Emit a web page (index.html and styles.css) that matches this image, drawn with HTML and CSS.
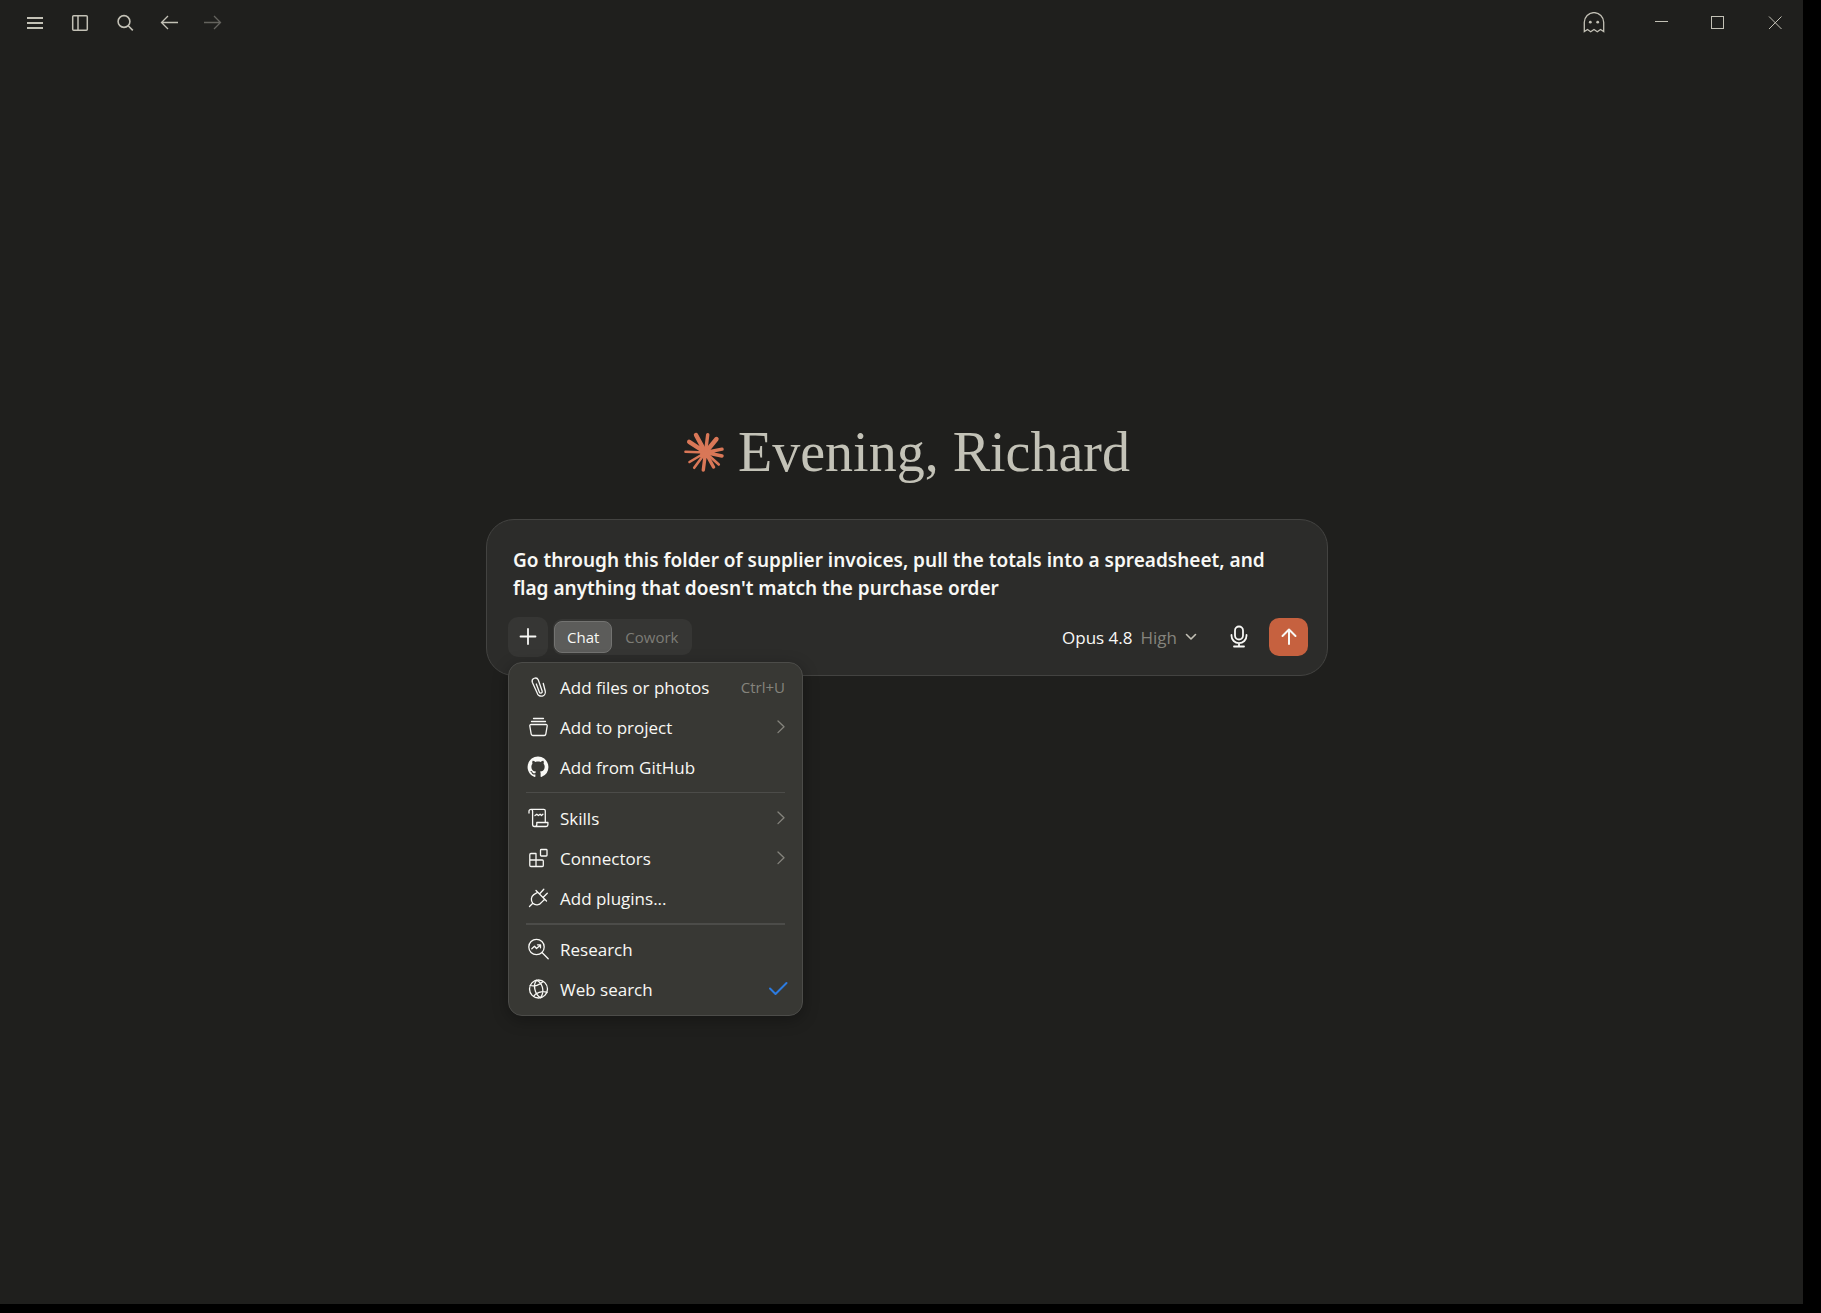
FILE: index.html
```html
<!DOCTYPE html>
<html lang="en">
<head>
    <meta charset="UTF-8">
    <meta name="viewport" content="width=device-width, initial-scale=1.0">
    <title>Claude</title>
    <link rel="stylesheet" href="styles.css">
</head>
<body>
    <div class="window">
        <header class="titlebar">
            <nav class="titlebar-nav">
                <button class="icon-btn" aria-label="Menu">
                    <svg width="20" height="20" viewBox="0 0 20 20" stroke-width="2"><path d="M2 5h16M2 10h16M2 15h16"/></svg>
                </button>
                <button class="icon-btn" aria-label="Toggle sidebar">
                    <svg width="20" height="20" viewBox="0 0 20 20" stroke-width="1.5"><rect x="2.7" y="2.7" width="14.6" height="14.6" rx="1"/><path d="M8 2.7v14.6"/></svg>
                </button>
                <button class="icon-btn" aria-label="Search">
                    <svg width="20" height="20" viewBox="0 0 20 20" stroke-width="1.6"><circle cx="9" cy="8.5" r="5.9"/><path d="M13.2 12.8l4.600 4.600"/></svg>
                </button>
                <button class="icon-btn history" aria-label="Back">
                    <svg width="20" height="20" viewBox="0 0 20 20" stroke-width="1.3"><path d="M19 9.500H2.500M9 3L2.500 9.500 9 16"/></svg>
                </button>
                <button class="icon-btn history dim" aria-label="Forward">
                    <svg width="20" height="20" viewBox="0 0 20 20" stroke-width="1.3"><path d="M2 9.500h16.500M12 3l6.500 6.500L12 16"/></svg>
                </button>
            </nav>
            <div class="titlebar-controls">
                <button class="icon-btn ghost" aria-label="Incognito chat">
                    <svg width="22" height="22" viewBox="0 0 22 22" stroke-width="1.3"><path d="M1.300 19.500V10.300a9.700 9.700 0 0 1 19.400 0v9.200l-3.200-2-3.200 2.200L11 17.500l-3.300 2.200-3.200-2.200z"/><circle class="solid" cx="7.300" cy="10.200" r="1.400"/><circle class="solid" cx="14.700" cy="10.200" r="1.400"/></svg>
                </button>
                <button class="icon-btn window-btn" aria-label="Minimize">
                    <svg width="14" height="14" viewBox="0 0 14 14" stroke-width="1"><path d="M1 5.500h13"/></svg>
                </button>
                <button class="icon-btn window-btn" aria-label="Maximize">
                    <svg width="14" height="14" viewBox="0 0 14 14" stroke-width="1"><rect x=".5" y=".5" width="12" height="12"/></svg>
                </button>
                <button class="icon-btn window-btn" aria-label="Close">
                    <svg width="14" height="14" viewBox="0 0 14 14" stroke-width="1"><path d="M1 .500l12.500 12.500M13.500 .5L1 13"/></svg>
                </button>
            </div>
        </header>

        <main class="main">
            <h1 class="greeting">
                <svg class="spark" width="40" height="40" viewBox="0 0 40 40" aria-hidden="true">
                    <circle cx="21.500" cy="20.500" r="5.500" stroke="none"/>
                    <g stroke-width="4.400">
                        <path d="M21.500 20.500L12 3M21.500 20.500L32.500 7M21.500 20.500L5.200 9.800"/>
                    </g>
                    <g stroke-width="3.400">
                        <path d="M21.500 20.500L23.700 2.700M21.500 20.500L38 17.200M21.500 20.500L38 24M21.500 20.500L29.500 35M21.500 20.500L19.300 38"/>
                    </g>
                    <g stroke-width="2.600">
                        <path d="M21.500 20.500L34.800 32.500M21.500 20.500L10.200 35.800M21.500 20.500L5.500 30M21.500 20.500L1.500 19.700"/>
                    </g>
                </svg>
                Evening, Richard
            </h1>

            <form class="composer">
                <textarea class="prompt" rows="2" aria-label="Prompt" spellcheck="false">Go through this folder of supplier invoices, pull the totals into a spreadsheet, and flag anything that doesn't match the purchase order</textarea>

                <div class="toolbar">
                    <div class="attach">
                        <button type="button" class="add-btn" aria-label="Add" aria-expanded="true">
                            <svg width="20" height="20" viewBox="0 0 20 20" stroke-width="1.800"><path d="M10 2v15M2.500 9.500h15"/></svg>
                        </button>

                        <div class="menu" role="menu">
                            <button type="button" class="menu-item" role="menuitem">
                                <svg class="menu-icon" width="24" height="24" viewBox="0 0 24 24"><path d="M17.300 8.500l1.900 7.500a4.100 4.100 0 0 1-8 2.100L6.300 7.200a3.200 3.200 0 0 1 6-2.200l3.900 11.200a1.500 1.500 0 0 1-2.900.8L10.300 9"/></svg>
                                <span class="menu-label">Add files or photos</span>
                                <kbd class="shortcut">Ctrl+U</kbd>
                            </button>
                            <button type="button" class="menu-item" role="menuitem">
                                <svg class="menu-icon" width="24" height="24" viewBox="0 0 24 24"><path d="M7.500 3.500h10M5.500 6.500h14M5 9.500h15a1.200 1.200 0 0 1 1.200 1.400l-1.400 8.300a1.600 1.600 0 0 1-1.600 1.300H6.800a1.600 1.600 0 0 1-1.600-1.300L3.800 10.900A1.200 1.200 0 0 1 5 9.500z"/></svg>
                                <span class="menu-label">Add to project</span>
                                <svg class="chevron" width="8" height="14" viewBox="0 0 8 14"><path d="M1 1l6 5.800-6 5.800"/></svg>
                            </button>
                            <button type="button" class="menu-item" role="menuitem">
                                <svg class="menu-icon github" width="24" height="24" viewBox="-1.200 -1.200 18.400 18.400"><path d="M8 0C3.580 0 0 3.580 0 8c0 3.540 2.290 6.530 5.470 7.590.4.070.55-.17.55-.38 0-.19-.01-.82-.01-1.490-2.010.37-2.530-.49-2.690-.94-.09-.23-.48-.94-.82-1.130-.28-.15-.68-.52-.01-.53.63-.01 1.080.58 1.230.82.72 1.210 1.870.87 2.330.66.07-.52.28-.87.51-1.070-1.780-.2-3.640-.89-3.640-3.950 0-.87.31-1.590.82-2.150-.08-.2-.36-1.020.08-2.120 0 0 .67-.21 2.200.82.64-.18 1.320-.27 2-.27s1.360.09 2 .27c1.530-1.040 2.200-.82 2.200-.82.44 1.100.16 1.920.08 2.120.51.56.82 1.270.82 2.150 0 3.070-1.870 3.750-3.650 3.950.29.25.54.73.54 1.480 0 1.070-.01 1.930-.01 2.200 0 .21.15.46.55.38A8.010 8.010 0 0 0 16 8c0-4.420-3.580-8-8-8z"/></svg>
                                <span class="menu-label">Add from GitHub</span>
                            </button>

                            <hr class="divider">

                            <button type="button" class="menu-item" role="menuitem">
                                <svg class="menu-icon" width="24" height="24" viewBox="0 0 24 24"><path d="M3 7V5.300a2 2 0 0 1 2-2h12.800a1.500 1.500 0 0 1 1.500 1.500v10.700M5 3.300a1.600 1.600 0 0 1 1.600 1.600v13.700a1.900 1.900 0 0 0 1.900 1.900h11.700a1.700 1.700 0 0 0 1.700-1.700v-2.300H10.800v2a2 2 0 0 1-2 2M9 9.500l1.800-1.300 1.600 1.300 1.700-1.300 1.400 1.300 1.400-1.300"/></svg>
                                <span class="menu-label">Skills</span>
                                <svg class="chevron" width="8" height="14" viewBox="0 0 8 14"><path d="M1 1l6 5.800-6 5.800"/></svg>
                            </button>
                            <button type="button" class="menu-item" role="menuitem">
                                <svg class="menu-icon" width="24" height="24" viewBox="0 0 24 24"><path d="M5 7.500h5v13H5A1.200 1.200 0 0 1 3.800 19.300V8.700A1.200 1.200 0 0 1 5 7.500zM3.800 14h12.500a1 1 0 0 1 1 1v4.500a1 1 0 0 1-1 1H10"/><rect x="14.500" y="3.500" width="6.500" height="6.500" rx=".8"/></svg>
                                <span class="menu-label">Connectors</span>
                                <svg class="chevron" width="8" height="14" viewBox="0 0 8 14"><path d="M1 1l6 5.800-6 5.800"/></svg>
                            </button>
                            <button type="button" class="menu-item" role="menuitem">
                                <svg class="menu-icon" width="24" height="24" viewBox="0 0 24 24"><path d="M3.500 20.500l3.300-3.300M10 4.500l10.500 10.500M11.700 6.200L7.800 8.600C4.800 10.700 4.700 14.800 6.800 17.200c2.400 2.300 6.600 2.200 8.700-.8l3.200-3.200M13.500 8l4.300-4.700M17 11.500l4.300-4.300"/></svg>
                                <span class="menu-label">Add plugins...</span>
                            </button>

                            <hr class="divider thick">

                            <button type="button" class="menu-item" role="menuitem">
                                <svg class="menu-icon" width="24" height="24" viewBox="0 0 24 24"><circle cx="10.500" cy="10" r="7.700"/><path d="M16 15.500l6.200 6.200M5.800 11.700l2.700-2.500 2 2.300 3.800-3.300M11.500 7.800h3v3"/></svg>
                                <span class="menu-label">Research</span>
                            </button>
                            <button type="button" class="menu-item" role="menuitemcheckbox" aria-checked="true">
                                <svg class="menu-icon" width="24" height="24" viewBox="0 0 24 24"><circle cx="12.500" cy="12" r="9"/><path d="M10.500 3.300C7 7.500 8.200 16.500 14.500 20.800M10.500 3.300c5.500 1.700 8.800 10.700 4 17.500M4.200 8.500c4 1.200 9.800-.5 12.800-4M7.500 19.500c2-3.500 8.500-6 13.500-4.200"/></svg>
                                <span class="menu-label">Web search</span>
                                <svg class="check" width="20" height="16" viewBox="0 0 20 16"><path d="M2 7.500l5.500 5.500L18.500 2"/></svg>
                            </button>
                        </div>
                    </div>

                    <div class="mode-switch">
                        <button type="button" class="mode active" aria-pressed="true">Chat</button>
                        <button type="button" class="mode" aria-pressed="false">Cowork</button>
                    </div>

                    <button type="button" class="model">
                        Opus 4.8 <span class="effort">High</span>
                        <svg width="12" height="8" viewBox="0 0 12 8" stroke-width="1.600"><path d="M1.500 1.500L6 6l4.500-4.500"/></svg>
                    </button>
                    <button type="button" class="mic" aria-label="Dictate">
                        <svg width="24" height="24" viewBox="0 0 24 24" stroke-width="1.800"><rect x="8" y="1.500" width="8" height="13" rx="4"/><path d="M4.500 10v.7a7.500 7.500 0 0 0 15 0V10M12 18.200v3.300M7 21.500h10"/></svg>
                    </button>
                    <button type="submit" class="send" aria-label="Send">
                        <svg width="20" height="20" viewBox="0 0 20 20" stroke-width="2"><path d="M10 17V2.500M3.500 9L10 2.500 16.500 9"/></svg>
                    </button>
                </div>
            </form>
        </main>
    </div>
</body>
</html>
```
FILE: styles.css
```css
:root {
    --background: #1f1f1d;
    --composer-bg: #2c2c2a;
    --control-bg: #363634;
    --menu-bg: #383834;
    --border: #434341;
    --menu-border: #4c4c49;
    --text: #f8f8f5;
    --muted: #85847d;
    --icon: #c3c1b6;
    --accent: #c6613f;
    --spark: #d97757;
    --check: #2c7be0;
}

* {
    margin: 0;
    padding: 0;
    box-sizing: border-box;
}

body {
    min-height: 100vh;
    display: flex;
    padding: 0 18px 9px 0;
    background: #000;
    color: var(--text);
    font-family: "Open Sans", "Noto Sans", sans-serif;
    font-size: 17px;
}

button {
    border: none;
    background: none;
    color: inherit;
    font: inherit;
    cursor: pointer;
}

svg {
    display: block;
    flex: none;
    fill: none;
    stroke: currentColor;
    stroke-linecap: round;
    stroke-linejoin: round;
}

.window {
    flex: 1;
    display: flex;
    flex-direction: column;
    background: var(--background);
}

/* Title bar */
.titlebar {
    display: flex;
    justify-content: space-between;
    height: 46px;
    padding-left: 12px;
    color: var(--icon);
}

.titlebar-nav,
.titlebar-controls {
    display: flex;
}

.icon-btn {
    display: flex;
    align-items: center;
    justify-content: center;
    width: 45px;
}

.icon-btn svg {
    stroke-linecap: butt;
    stroke-linejoin: miter;
}

.icon-btn.history {
    width: 43px;
}

.icon-btn.dim {
    color: #64635e;
}

.icon-btn.ghost {
    margin-right: 16px;
}

.icon-btn .solid {
    fill: currentColor;
    stroke: none;
}

.icon-btn.window-btn {
    width: 57px;
}

/* Greeting */
.main {
    display: flex;
    flex-direction: column;
    align-items: center;
    padding: 374px 0 0 11px;
}

.greeting {
    display: flex;
    align-items: center;
    gap: 14px;
    margin-bottom: 35px;
    color: #c3c2b7;
    font-family: "Liberation Serif", serif;
    font-size: 56px;
    font-weight: 400;
    line-height: 64px;
}

.spark {
    fill: var(--spark);
    stroke: var(--spark);
}

/* Composer */
.composer {
    width: 100%;
    max-width: 842px;
    padding: 26px 19px 18px 21px;
    background: var(--composer-bg);
    border: 1px solid var(--border);
    border-radius: 28px;
}

.prompt {
    display: block;
    width: 100%;
    padding: 0 20px 0 5px;
    border: none;
    outline: none;
    resize: none;
    overflow: hidden;
    background: none;
    color: var(--text);
    font-family: "Noto Sans", sans-serif;
    font-size: 19px;
    font-weight: 600;
    line-height: 28px;
}

.toolbar {
    display: flex;
    align-items: center;
    margin-top: 15px;
}

.attach {
    position: relative;
    margin-right: 5px;
}

.add-btn {
    display: flex;
    align-items: center;
    justify-content: center;
    width: 40px;
    height: 40px;
    background: var(--control-bg);
    border-radius: 10px;
}

.mode-switch {
    display: flex;
    padding: 2px 1px;
    background: var(--control-bg);
    border-radius: 9px;
}

.mode {
    height: 32px;
    padding: 0 12px;
    border: 1px solid transparent;
    border-radius: 8px;
    color: #7d7c76;
    font-size: 15px;
}

.mode.active {
    background: #5c5c5a;
    border-color: #737371;
    color: var(--text);
}

.model {
    display: flex;
    align-items: center;
    gap: 8px;
    margin-left: auto;
}

.effort {
    color: var(--muted);
}

.model svg {
    color: var(--icon);
}

.mic {
    margin: 0 18px 0 30px;
}

.send {
    display: flex;
    align-items: center;
    justify-content: center;
    width: 39px;
    height: 38px;
    background: var(--accent);
    border-radius: 10px;
}

/* Dropdown menu */
.menu {
    position: absolute;
    top: 45px;
    left: 0;
    z-index: 10;
    width: 295px;
    padding: 4px 0 6px;
    background: var(--menu-bg);
    border: 1px solid var(--menu-border);
    border-radius: 14px;
    box-shadow: 0 4px 16px rgba(0, 0, 0, 0.3);
}

.menu-item {
    display: flex;
    align-items: center;
    gap: 10px;
    width: 100%;
    height: 40px;
    padding: 0 17px;
    text-align: left;
}

.menu-icon {
    stroke-width: 1.3;
}

.menu-icon.github {
    fill: currentColor;
    stroke: none;
}

.menu-label {
    flex: 1;
    white-space: nowrap;
}

.shortcut {
    color: var(--muted);
    font-family: inherit;
    font-size: 15px;
}

.chevron {
    color: var(--muted);
    stroke-width: 1.3;
}

.check {
    margin-right: -3px;
    color: var(--check);
    stroke-width: 2;
}

.divider {
    height: 1px;
    margin: 5px 17px;
    border: none;
    background: var(--menu-border);
}

.divider.thick {
    height: 2px;
    margin-bottom: 4px;
}
```
